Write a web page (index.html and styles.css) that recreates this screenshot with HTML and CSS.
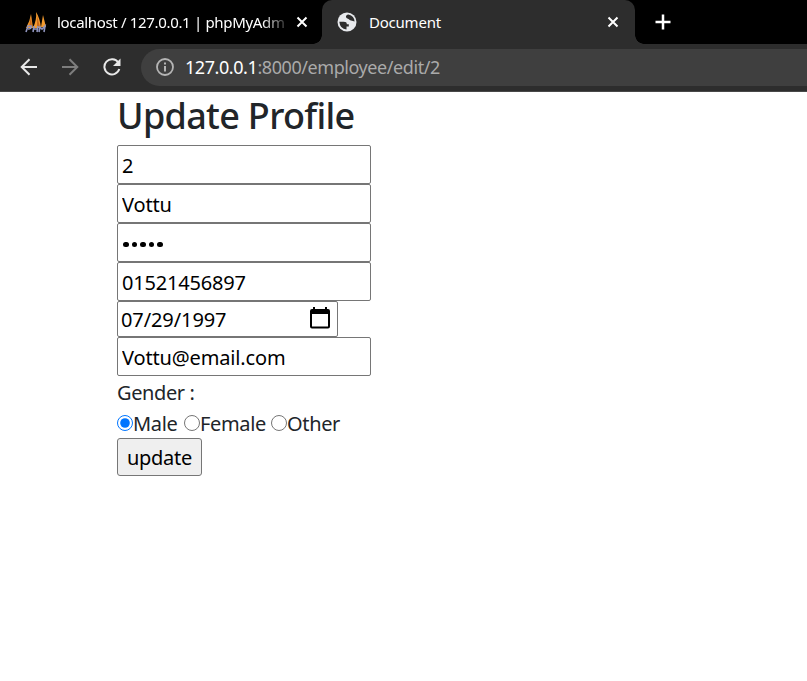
FILE: index.html
```
<!DOCTYPE html>
<html lang="en">
<head>
<meta charset="utf-8">
<title>Document</title>
<link rel="stylesheet" href="styles.css">
</head>
<body>
<header class="browser">
  <div class="tabs">
    <div class="tab tab-inactive">
      <svg class="pma" width="24" height="23" viewBox="0 0 24 23">
        <path d="M2 17Q6 10 7 3L9 17zM9 17Q13 8 12 1Q16 7 17 17zM17 16L19 4L22 16z" fill="#f29a2e"/>
        <path d="M5 16L7 5L8 16M13 16V5L16 16" fill="#c7681c"/>
        <path d="M2 21L4 15H7Q8 18 4 18M9 21L10 15M9 18H13M14 15L13 21M15 21L16 16L18 18L21 15L20 21" fill="none" stroke="#8f94bd" stroke-width="1.6"/>
      </svg>
      <span class="tab-title title-pma">localhost / 127.0.0.1 | phpMyAdm</span>
      <svg class="close" width="12" height="12" viewBox="0 0 12 12"><path d="M1.5 1.5L10.5 10.5M10.5 1.5L1.5 10.5" stroke="#fff" stroke-width="2"/></svg>
    </div>
    <div class="tab tab-active">
      <svg class="globe" width="20" height="20" viewBox="0 0 20 20">
        <circle cx="10" cy="10" r="9.500" fill="#e8eaed"/>
        <path d="M11.500 2.500Q8.500 3 9 5.300Q9.500 6.500 11.500 7Q13 8.800 15 8.800L17.600 9.500Q17.300 4 11.500 2.500ZM2.300 9.800H6.500Q9.800 9.700 9.800 12.200H11.800V14.500H9.500V17.600Q3 17 2.300 9.800Z" fill="#2d2d2d"/>
      </svg>
      <span class="tab-title title-doc">Document</span>
      <svg class="close" width="12" height="12" viewBox="0 0 12 12"><path d="M1.5 1.5L10.5 10.5M10.5 1.5L1.5 10.5" stroke="#fff" stroke-width="2"/></svg>
    </div>
    <svg class="plus" width="16" height="16" viewBox="0 0 16 16"><path d="M8 .5V15.500M.5 8H15.500" stroke="#fff" stroke-width="2.500"/></svg>
  </div>
  <div class="toolbar">
    <svg class="nav-icon" width="18" height="18" viewBox="0 0 18 18"><path d="M17 9H2M9.500 1.200L1.700 9L9.500 16.800" fill="none" stroke="#e8e8e8" stroke-width="2"/></svg>
    <svg class="nav-icon" width="18" height="18" viewBox="0 0 18 18"><path d="M1 9H16M8.500 1.200L16.300 9L8.500 16.800" fill="none" stroke="#7d7d7d" stroke-width="2"/></svg>
    <svg class="nav-icon" width="18" height="18" viewBox="0 0 18 18"><path d="M15.300 4.500A7.600 7.600 0 1 0 16.300 11" fill="none" stroke="#e8e8e8" stroke-width="2"/><path d="M17.500 .5V8H10z" fill="#e8e8e8"/></svg>
    <div class="address">
      <svg class="info" width="18" height="18" viewBox="0 0 18 18"><circle cx="9" cy="9" r="8" fill="none" stroke="#b5b5b5" stroke-width="1.800"/><path d="M9 8V13.500M9 4.500V6.500" stroke="#b5b5b5" stroke-width="2"/></svg>
      <span class="url"><span class="host">127.0.0.1</span>:8000/employee/edit/2</span>
    </div>
  </div>
</header>
<main class="page">
  <h1 class="heading">Update Profile</h1>
  <form class="form">
    <input class="field" type="text" value="2">
    <input class="field vottu" type="text" value="Vottu">
    <div class="field secret"><i class="dot"></i><i class="dot"></i><i class="dot"></i><i class="dot"></i><i class="dot"></i></div>
    <input class="field phone" type="text" value="01521456897">
    <div class="field date"><span>07/29/1997</span>
      <svg width="20" height="22" viewBox="0 0 20 22"><path d="M3 0H5V2H15V0H17V2H18Q20 2 20 4V19.500Q20 21.500 18 21.500H2Q0 21.500 0 19.500V4Q0 2 2 2H3zM2 7V19.500H18V7z" fill="#000" fill-rule="evenodd"/></svg>
    </div>
    <input class="field email" type="text" value="Vottu@email.com">
    <div class="gender">Gender :</div>
    <div class="options">
      <label class="option male"><input class="radio" type="radio" name="gender" checked><span>Male</span></label>
      <label class="option female"><input class="radio" type="radio" name="gender"><span>Female</span></label>
      <label class="option"><input class="radio" type="radio" name="gender"><span>Other</span></label>
    </div>
    <button class="submit" type="button">update</button>
  </form>
</main>
</body>
</html>
```
FILE: styles.css
```
* { box-sizing: border-box; }
body { margin: 0; background: #fff; color: #212529; font: 20px "Noto Sans", sans-serif; overflow: hidden; }
svg { display: block; flex: none; }
.browser { height: 92px; background: #2d2d2d; border-bottom: 1px solid #484848; }
.tabs { display: flex; height: 44px; background: #000; }
.tab { display: flex; align-items: center; height: 44px; color: #fff; font-size: 15px; }
.tab-inactive { width: 322px; padding-left: 24px; }
.tab-active { position: relative; width: 313px; padding-left: 15px; background: #2d2d2d; border-radius: 10px 10px 0 0; }
.tab-active::before, .tab-active::after { content: ""; position: absolute; bottom: 0; width: 9px; height: 9px; }
.tab-active::before { left: -9px; background: radial-gradient(circle at 0 0, #000 8.5px, #2d2d2d 9px); }
.tab-active::after { right: -9px; background: radial-gradient(circle at 100% 0, #000 8.5px, #2d2d2d 9px); }
.tab-title { white-space: nowrap; line-height: 24px; margin-top: -1px; }
.title-pma { width: 228px; margin-left: 9px; letter-spacing: -.33px; -webkit-mask-image: linear-gradient(90deg, #000 205px, rgba(0, 0, 0, .2) 228px); mask-image: linear-gradient(90deg, #000 205px, rgba(0, 0, 0, .2) 228px); }
.title-doc { width: 228px; margin-left: 12px; letter-spacing: -.22px; }
.tab-inactive .close { margin-left: 11px; }
.tab-active .close { margin-left: 10px; }
.plus { margin: 14px 0 0 20px; }
.toolbar { display: flex; align-items: center; height: 47px; padding-left: 20px; }
.nav-icon { margin: -1px 24px 0 0; }
.nav-icon:first-child { margin-right: 23px; }
.address { display: flex; flex: 1; align-items: center; height: 37px; margin-left: -4px; padding-left: 15px; background: #3f3f3f; border-radius: 19px 0 0 19px; }
.info { margin-top: -1px; }
.url { margin: -2px 0 0 11px; color: #aaa; font-size: 18px; line-height: 26px; letter-spacing: -.43px; white-space: nowrap; }
.host { color: #fff; }
.page { padding-left: 117px; }
.heading { height: 53px; margin: 0; font-size: 36px; font-weight: 500; line-height: 47px; letter-spacing: -.68px; white-space: nowrap; }
.form { display: flex; flex-direction: column; align-items: flex-start; }
.field { width: 254px; height: 39px; margin: 0; padding: 2px 4px 0; border: 1px solid #767676; border-radius: 2px; background: #fff; color: #000; font: 20px "Noto Sans", sans-serif; outline: 0; }
.vottu, .email { letter-spacing: -.15px; }
.secret { display: flex; align-items: center; gap: 3px; padding-left: 5px; }
.dot { width: 5.5px; height: 5.5px; margin-top: 2px; border-radius: 50%; background: #000; }
.phone { letter-spacing: -.2px; }
.date { display: flex; align-items: center; justify-content: space-between; width: 221px; height: 36px; padding: 0 7px 0 3px; letter-spacing: -.1px; }
.date svg { margin-bottom: 3px; }
.gender { height: 31px; line-height: 34px; letter-spacing: -.4px; }
.options { display: flex; height: 31px; line-height: 33px; letter-spacing: -.35px; }
.option { display: flex; align-items: center; }
.option span { padding-top: 1px; }
.radio { width: 16px; height: 16px; margin: 0; flex: none; }
.male { width: 67px; }
.female { width: 87px; }
.submit { width: 85px; height: 38px; margin: 0; padding: 0; border: 1px solid #767676; border-radius: 3px; background: #efefef; color: #000; font: 20px "Noto Sans", sans-serif; letter-spacing: -.3px; }
```
